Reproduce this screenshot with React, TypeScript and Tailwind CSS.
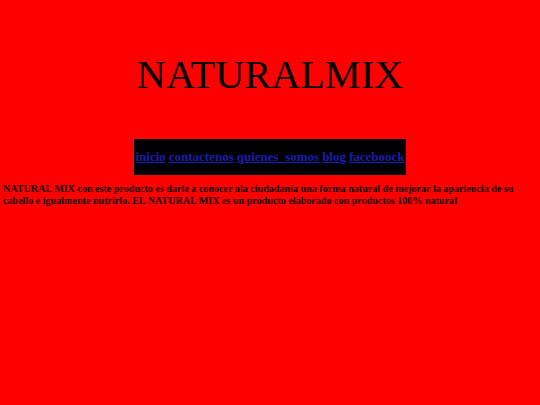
export default function App() {
  const links = ['inicio', 'contactenos', 'quienes  somos', 'blog', 'faceboock']

  return (
    <div className="min-h-[405px] w-full bg-[#ff0000] font-['Liberation_Serif',serif] text-black">
      <h1 className="pt-[53px] text-center text-[40.3px] leading-[44px]">NATURALMIX</h1>

      <div className="mt-[42px] flex justify-center">
        <nav className="flex h-[36px] w-[272px] items-center justify-center gap-[3px] bg-black text-[13px] font-bold">
          {links.map((l) => (
            <a key={l} href="#" className="whitespace-pre text-[#1c1cb0] underline">
              {l}
            </a>
          ))}
        </nav>
      </div>

      <p className="mt-[8px] px-[3px] text-[10.1px] leading-[12px] font-bold text-[#1a0000]">
        NATURAL MIX con este producto es darle a conocer ala ciudadania una forma natural de mejorar la apariencia de su
        cabello e igualmente nutrirlo. EL NATURAL MIX es un producto elaborado con productos 100% natural
      </p>
    </div>
  )
}
